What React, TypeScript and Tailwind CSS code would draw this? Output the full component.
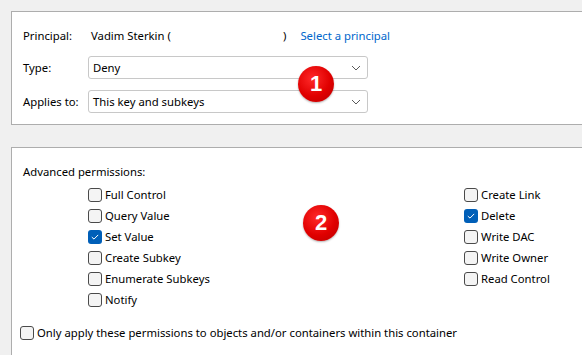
import React from "react";

const LEFT = ["Full Control", "Query Value", "Set Value", "Create Subkey", "Enumerate Subkeys", "Notify"];
const RIGHT = ["Create Link", "Delete", "Write DAC", "Write Owner", "Read Control"];
const CHECKED = ["Set Value", "Delete"];

function Box({ checked }: { checked?: boolean }) {
  if (checked) {
    return (
      <span className="w-[14px] h-[14px] rounded-[3px] bg-[#005fb8] flex items-center justify-center shrink-0">
        <svg width="8" height="6" viewBox="0 0 8 6">
          <path d="M0.8 3.1 L3 5.1 L7.2 0.9" fill="none" stroke="#fff" strokeWidth="1" />
        </svg>
      </span>
    );
  }
  return <span className="w-[14px] h-[14px] rounded-[3px] border border-[#4a4a4a] bg-[#f4f4f4] shrink-0" />;
}

function Check({ label }: { label: string }) {
  return (
    <div className="h-[21px] flex items-center gap-[3px]">
      <Box checked={CHECKED.includes(label)} />
      <span>{label}</span>
    </div>
  );
}

function Select({ value }: { value: string }) {
  return (
    <div className="w-[280px] h-[23px] rounded-[3px] border border-[#c8c8c8] bg-white flex items-center justify-between pl-[4px] pr-[6px]">
      <span>{value}</span>
      <svg width="10" height="6" viewBox="0 0 10 6">
        <path d="M1 1 L5 5 L9 1" fill="none" stroke="#5a5a5a" strokeWidth="1" />
      </svg>
    </div>
  );
}

function Badge({ n }: { n: string }) {
  return (
    <span className="absolute w-[36px] h-[36px] rounded-full bg-[radial-gradient(circle_at_40%_35%,#ff2a2a,#e00000_55%,#b80000)] flex items-center justify-center text-white text-[22px] font-bold font-['Liberation_Sans',sans-serif] shadow-[0_1px_2px_rgba(0,0,0,0.3)]">
      {n}
    </span>
  );
}

export default function App() {
  return (
    <div className="w-[582px] h-[355px] overflow-hidden bg-[#f0f0f0] pt-[11px] pl-[11px] font-['Noto_Sans',sans-serif] text-[11.3px] text-black leading-[16px]">
      {/* Principal / type / applies */}
      <div className="relative w-[600px] h-[114px] border border-[#adadad] bg-white pt-[16px] pl-[11px]">
        <div className="h-[16px] flex items-center">
          <span className="w-[65px]">Principal:</span>
          <span className="pl-[3px] w-[195px]">Vadim Sterkin (</span>
          <span>)</span>
          <span className="ml-[14px] text-[#0066cc]">Select a principal</span>
        </div>
        <div className="mt-[12px] flex items-center">
          <span className="w-[65px]">Type:</span>
          <Select value="Deny" />
        </div>
        <div className="mt-[11px] flex items-center">
          <span className="w-[65px]">Applies to:</span>
          <Select value="This key and subkeys" />
        </div>
        <div className="absolute left-[286px] top-[54px] w-[36px] h-[36px]">
          <Badge n="1" />
        </div>
      </div>

      {/* Advanced permissions */}
      <div className="relative mt-[22px] w-[600px] h-[230px] border border-[#adadad] bg-white pt-[16px] pl-[8px]">
        <div className="pl-[3px]">Advanced permissions:</div>
        <div className="mt-[4px] ml-[68px] flex">
          <div className="w-[376px]">
            {LEFT.map((l) => (
              <Check key={l} label={l} />
            ))}
          </div>
          <div>
            {RIGHT.map((l) => (
              <Check key={l} label={l} />
            ))}
          </div>
        </div>
        <div className="mt-[12px]">
          <Check label="Only apply these permissions to objects and/or containers within this container" />
        </div>
        <div className="absolute left-[291px] top-[57px] w-[36px] h-[36px]">
          <Badge n="2" />
        </div>
      </div>
    </div>
  );
}
